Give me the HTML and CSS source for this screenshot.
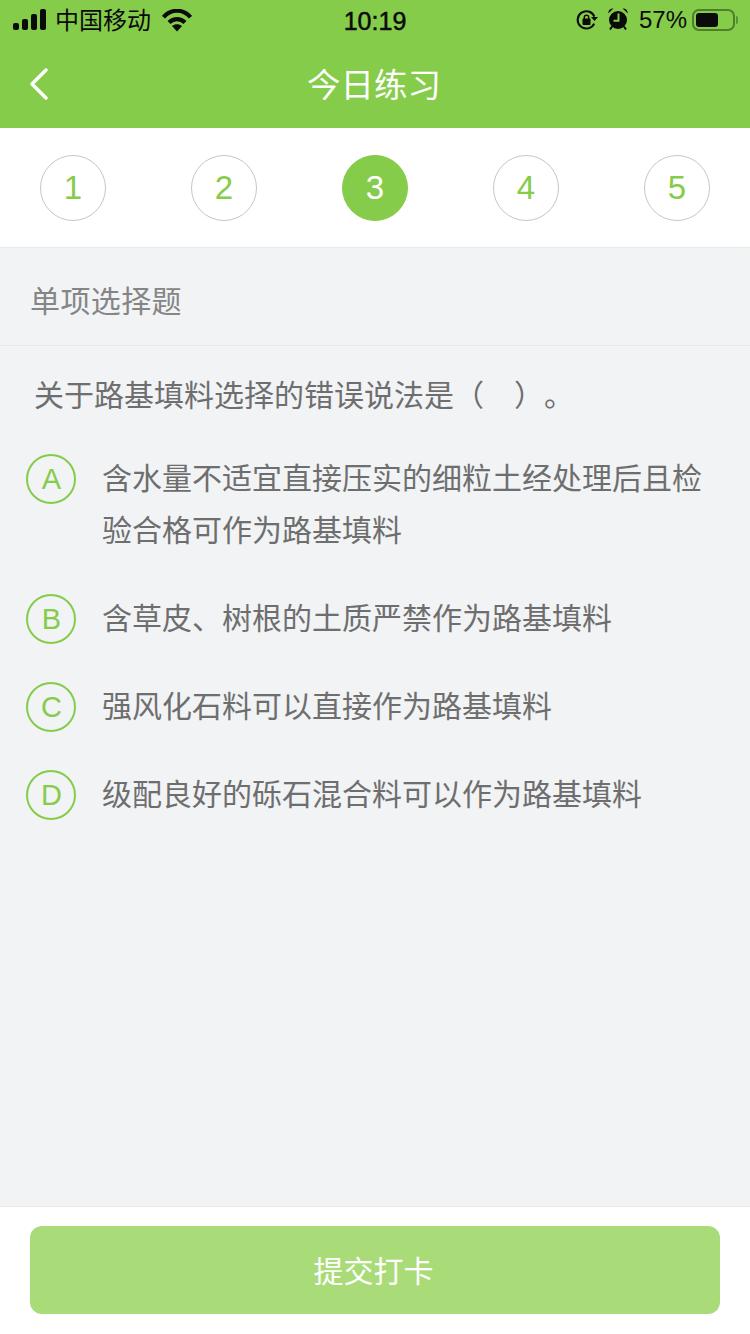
FILE: index.html
```html
<!DOCTYPE html>
<html lang="zh-CN">
<head>
    <meta charset="UTF-8">
    <meta name="viewport" content="width=device-width, initial-scale=1.0">
    <title>今日练习</title>
    <link rel="stylesheet" href="styles.css">
</head>
<body>
    <div class="page">
        <header class="top">
            <div class="status-bar">
                <div class="status-left">
                    <svg class="signal" width="33" height="22" viewBox="0 0 33 22" fill="#0b0b0b">
                        <rect x="0" y="14" width="6" height="7" rx="2"/>
                        <rect x="9" y="10" width="6" height="11" rx="2"/>
                        <rect x="18" y="5" width="6" height="16" rx="2"/>
                        <rect x="27" y="0" width="6" height="21" rx="2"/>
                    </svg>
                    <span class="carrier">中国移动</span>
                    <svg class="wifi" width="30" height="23" viewBox="0 0 30 23" fill="none" stroke="#0b0b0b" stroke-width="4.200">
                        <path d="M1.500 8.200C9-.4 21-.4 28.500 8.200"/>
                        <path d="M7 13.600c4.600-4.600 11.400-4.600 16 0"/>
                        <path d="M15 22.500l-5-5.500c2.800-2.400 7.200-2.400 10 0z" fill="#0b0b0b" stroke="none"/>
                    </svg>
                </div>
                <div class="status-time">10:19</div>
                <div class="status-right">
                    <svg class="lock" width="22" height="22" viewBox="0 0 22 22" fill="none" stroke="#0b0b0b" stroke-width="2">
                        <path d="M18.200 14.600A8.700 8.700 0 1 1 18.400 7.600"/>
                        <path d="M22 8h-7l3.500 4z" fill="#0b0b0b" stroke="none"/>
                        <rect x="6.500" y="9.600" width="8" height="6.400" rx="1" fill="#0b0b0b" stroke="none"/>
                        <path d="M8.300 10V8.400a2.200 2.200 0 0 1 4.400 0V10" stroke-width="1.500"/>
                    </svg>
                    <svg class="alarm" width="20" height="22" viewBox="0 0 20 22" fill="#0b0b0b">
                        <circle cx="10" cy="12" r="9"/>
                        <path d="M.2 5.600C.2 2.400 2.400.4 5.400.6zM19.800 5.600c0-3.200-2.200-5.200-5.200-5z"/>
                        <path d="M4 18.500l-2 3M16 18.500l2 3" stroke="#0b0b0b" stroke-width="2"/>
                        <path d="M10.500 5.500v7.200H5.500" fill="none" stroke="#86cc4b" stroke-width="2"/>
                    </svg>
                    <span class="battery-pct">57%</span>
                    <div class="battery"><div class="battery-level"></div></div>
                    <div class="battery-cap"></div>
                </div>
            </div>
            <div class="nav-bar">
                <svg class="back" width="20" height="32" viewBox="0 0 20 32" fill="none" stroke="#fff" stroke-width="3.400" stroke-linecap="round" stroke-linejoin="round">
                    <path d="M17 2L3 16l14 14"/>
                </svg>
                <div class="nav-title">今日练习</div>
            </div>
        </header>

        <div class="steps">
            <div class="step">1</div>
            <div class="step">2</div>
            <div class="step step-active">3</div>
            <div class="step">4</div>
            <div class="step">5</div>
        </div>

        <main class="content">
            <div class="q-type">单项选择题</div>
            <div class="question">关于路基填料选择的错误说法是（　）。</div>
            <div class="options">
                <div class="option">
                    <div class="option-mark">A</div>
                    <div class="option-text">含水量不适宜直接压实的细粒土经处理后且检验合格可作为路基填料</div>
                </div>
                <div class="option">
                    <div class="option-mark">B</div>
                    <div class="option-text">含草皮、树根的土质严禁作为路基填料</div>
                </div>
                <div class="option">
                    <div class="option-mark">C</div>
                    <div class="option-text">强风化石料可以直接作为路基填料</div>
                </div>
                <div class="option">
                    <div class="option-mark">D</div>
                    <div class="option-text">级配良好的砾石混合料可以作为路基填料</div>
                </div>
            </div>
        </main>

        <footer class="bottom">
            <button type="button" class="submit-btn">提交打卡</button>
        </footer>
    </div>
</body>
</html>
```

FILE: styles.css
```css
:root {
    --green: #86cc4b;
    --bg: #f1f3f5;
    --line: #e8e9eb;
}
html, body {
    margin: 0;
    padding: 0;
    height: 100%;
    font-family: "Liberation Sans", "Noto Sans CJK SC", sans-serif;
    background: var(--bg);
}
.page {
    width: 750px;
    height: 1334px;
    display: flex;
    flex-direction: column;
    overflow: hidden;
}
.top {
    background: var(--green);
    height: 128px;
    flex-shrink: 0;
}
.status-bar {
    height: 40px;
    display: grid;
    grid-template-columns: 1fr auto 1fr;
    align-items: center;
    color: #0b0b0b;
}
.status-left {
    display: flex;
    align-items: center;
    padding-left: 13px;
}
.carrier {
    font-size: 24px;
    line-height: 38px;
    margin-left: 9px;
    padding-top: 2px;
}
.wifi {
    margin-left: 11px;
}
.status-time {
    font-size: 25px;
    padding-top: 2px;
    -webkit-text-stroke: 0.5px #0b0b0b;
}
.status-right {
    display: flex;
    align-items: center;
    justify-content: flex-end;
    padding-right: 12px;
}
.alarm {
    margin-left: 10px;
    margin-bottom: 2px;
}
.battery-pct {
    font-size: 24px;
    margin-left: 11px;
}
.battery {
    width: 43px;
    height: 22px;
    border: 2px solid #4f7f2c;
    border-radius: 7px;
    margin-left: 5px;
    padding: 2px;
    box-sizing: border-box;
}
.battery-level {
    width: 22px;
    height: 100%;
    background: #0b0b0b;
    border-radius: 3px;
}
.battery-cap {
    width: 2px;
    height: 8px;
    background: #5d8f38;
    border-radius: 0 2px 2px 0;
    margin-left: 1px;
}
.nav-bar {
    height: 88px;
    position: relative;
    display: flex;
    align-items: center;
    justify-content: center;
}
.back {
    position: absolute;
    left: 29px;
    top: 28px;
}
.nav-title {
    font-size: 33.500px;
    color: #fff;
    margin: -4px 2px 0 0;
}
.steps {
    height: 119px;
    flex-shrink: 0;
    background: #fff;
    border-bottom: 1px solid var(--line);
    display: flex;
    justify-content: space-between;
    align-items: center;
    padding: 0 40px;
}
.step {
    width: 66px;
    height: 66px;
    box-sizing: border-box;
    border: 1px solid #c6c6c6;
    border-radius: 50%;
    color: var(--green);
    font-size: 33px;
    display: flex;
    align-items: center;
    justify-content: center;
}
.step-active {
    background: var(--green);
    border-color: var(--green);
    color: #fff;
}
.content {
    flex: 1;
    min-height: 0;
}
.q-type {
    height: 98px;
    box-sizing: border-box;
    border-bottom: 1px solid var(--line);
    padding-left: 30px;
    font-size: 30px;
    letter-spacing: 0.4px;
    line-height: 108px;
    color: #858585;
}
.question {
    font-size: 30px;
    line-height: 50px;
    color: #6e6e6e;
    padding: 25px 34px 0;
    text-spacing-trim: space-all;
}
.options {
    display: flex;
    flex-direction: column;
    gap: 36px;
    padding: 32px 26px 0;
}
.option {
    display: flex;
    align-items: flex-start;
}
.option-mark {
    width: 50px;
    height: 50px;
    flex-shrink: 0;
    box-sizing: border-box;
    border: 2px solid var(--green);
    border-radius: 50%;
    margin-top: 1px;
    margin-right: 26px;
    padding-left: 1px;
    color: var(--green);
    font-size: 29px;
    display: flex;
    align-items: center;
    justify-content: center;
}
.option-text {
    flex: 1;
    font-size: 30px;
    line-height: 52px;
    color: #6e6e6e;
}
.bottom {
    height: 128px;
    flex-shrink: 0;
    box-sizing: border-box;
    background: #fff;
    border-top: 1px solid var(--line);
    padding: 19px 30px 0;
}
.submit-btn {
    width: 100%;
    height: 88px;
    background: #a9dc78;
    color: #fff;
    border: none;
    border-radius: 12px;
    padding: 0 3px 3px 0;
    font-family: inherit;
    font-size: 30px;
    cursor: pointer;
}
```
